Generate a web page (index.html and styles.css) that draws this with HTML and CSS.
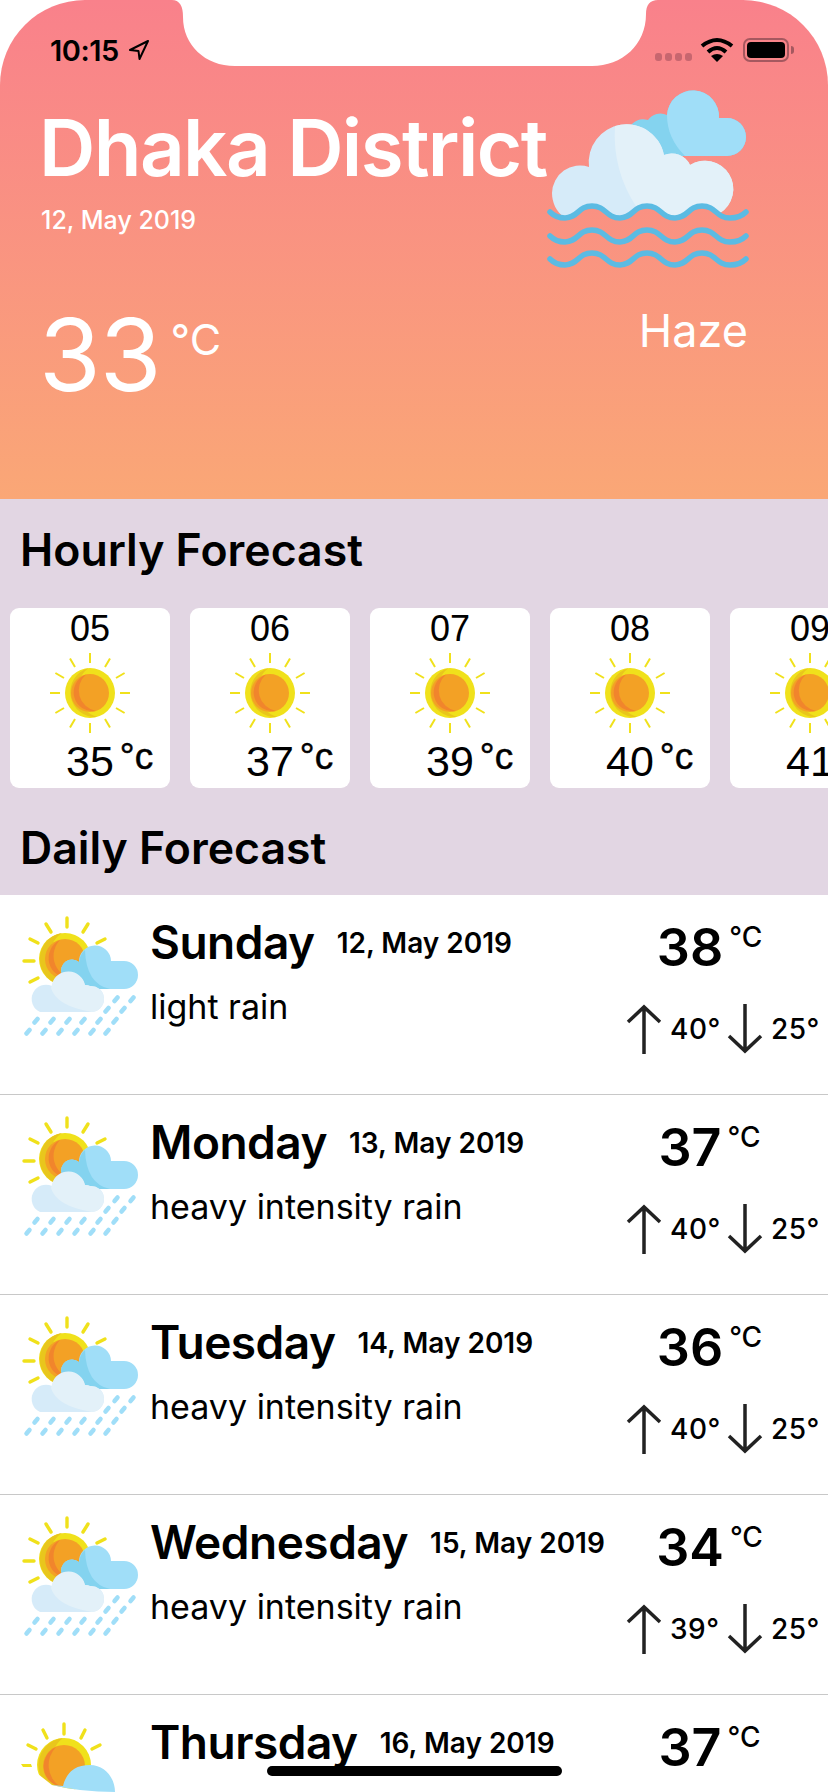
FILE: index.html
```html
<!DOCTYPE html>
<html lang="en">
<head>
    <meta charset="UTF-8">
    <meta name="viewport" content="width=device-width, initial-scale=1.0">
    <title>Weather</title>
    <link rel="stylesheet" href="styles.css">
</head>
<body>
    <svg class="defs" width="0" height="0">
        <defs>
            <symbol id="sun" viewBox="0 0 80 80">
                <g stroke="#f0e11b" stroke-width="2">
                    <path id="rays" d="M40 0V10M40 70V80M0 40H10M70 40H80M20 5.4L25 14M55 66L60 74.6M5.4 20L14 25M66 55L74.6 60M60 5.4L55 14M25 66L20 74.6M74.6 20L66 25M14 55L5.4 60"/>
                </g>
                <circle cx="40" cy="40" r="25" fill="#f0e11b"/>
                <path d="M38.5 15A25 25 0 0 0 47 64A28 28 0 0 1 38.5 15Z" fill="#e9c61c"/>
                <circle cx="40" cy="40" r="19" fill="#f3a125"/>
                <path d="M36 21.5A19 19 0 0 0 46 58A21 21 0 0 1 36 21.5Z" fill="#f1852c"/>
            </symbol>
            <symbol id="rain" viewBox="20 15 120 125">
                <path d="M67 18V27M46 24L51 32M88 24L83 32M30 39L38 43M105 39L97 43M24 61H34M30 82L38 78" stroke="#f0e11b" stroke-width="3.4" stroke-linecap="round"/>
                <circle cx="65" cy="59" r="26" fill="#f0e11b"/>
                <path d="M62 33A26 26 0 0 0 70 85A29 29 0 0 1 62 33Z" fill="#e9c61c"/>
                <circle cx="65" cy="59" r="20" fill="#f3a125"/>
                <path d="M60 40A20 20 0 0 0 70 78A23 23 0 0 1 60 40Z" fill="#f1852c"/>
                <path d="M74 89H124A14 14 0 0 0 124 61H111A16 16 0 0 0 79 62A11 11 0 0 0 62 75A8 8 0 0 0 62 89Z" fill="#a0def8"/>
                <path d="M79 62A11 11 0 0 0 62 75A8 8 0 0 0 62 89H110Q86 84 85 50Q80 54 79 62Z" fill="#84d3ef"/>
                <path d="M40 112H92A13 13 0 0 0 90 86A10 10 0 0 0 85 85A17 17 0 0 0 52 86A13 13 0 0 0 40 112Z" fill="#d6ebf9"/>
                <path d="M51 88Q56 106 92 112A13 13 0 0 0 90 86A10 10 0 0 0 85 85A17 17 0 0 0 52 84Z" fill="#e3f1f9"/>
                <path d="M34.500 122.500L37.500 119M50.500 122.500L53.500 119M66.500 122.500L69.500 119M81.500 122.500L84.500 119M97.500 122.500L100.500 119M113.500 122.500L116.500 119M26.500 133.500L29.500 130M42.500 133.500L45.500 130M58.500 133.500L61.500 130M74.500 133.500L77.500 130M90.500 133.500L93.500 130M105.500 133.500L108.500 130M114.500 101L117.500 97.500M130.500 101L133.500 97.500M105.500 111.500L108.500 108M121.500 111.500L124.500 108" stroke="#a0def8" stroke-width="4.500" stroke-linecap="round"/>
            </symbol>
            <!-- the last row's picture is cut off in a curve at the bottom of the screen -->
            <symbol id="rain-cut" viewBox="10 5 120 77">
                <path d="M54 14V24M33 20L37 28M75 20L71 28M18 35L26 39M90 35L82 39" stroke="#f0e11b" stroke-width="3.4" stroke-linecap="round"/>
                <path d="M11 54H21L22 57H13Z" fill="#f0e11b"/>
                <circle cx="54" cy="55" r="27" fill="#f0e11b"/>
                <path d="M53 28A27 27 0 0 0 58 82A32 32 0 0 1 53 28Z" fill="#e9c61c"/>
                <circle cx="54" cy="56" r="21" fill="#f3a125"/>
                <path d="M46 37A21 21 0 0 0 50 76.600A26 26 0 0 1 46 37Z" fill="#f1852c"/>
                <path d="M18 60L28 64L42 75Q70 82 105 82H18Z" fill="#fff"/>
                <path d="M42 75L53 76Q58 55 80 55C95 55 105 68 105 82Q70 82 42 75Z" fill="#a0def8"/>
            </symbol>
            <symbol id="arrow-up" viewBox="0 0 36 50">
                <path d="M18 50V3M2 18L18 3L34 18" fill="none" stroke="#222" stroke-width="3.500"/>
            </symbol>
            <symbol id="arrow-down" viewBox="0 0 36 50">
                <path d="M18 0V47M2 32L18 47L34 32" fill="none" stroke="#222" stroke-width="3.500"/>
            </symbol>
        </defs>
    </svg>

    <div class="phone">
        <header class="hero">
            <div class="status">
                <div class="status-left">
                    <span class="time">10:15</span>
                    <svg class="location" width="22" height="22" viewBox="0 0 22 22">
                        <path d="M20 2L2 11L10.500 12L11.500 20Z" fill="none" stroke="#000" stroke-width="2" stroke-linejoin="round"/>
                    </svg>
                </div>
                <div class="status-right">
                    <div class="signal"><i></i><i></i><i></i><i></i></div>
                    <svg class="wifi" width="34" height="26" viewBox="0 0 34 26">
                        <path d="M2 9Q17 -3 32 9M8 15Q17 7 26 15" fill="none" stroke="#000" stroke-width="4"/>
                        <path d="M11 19Q17 15 23 19L17 25Z"/>
                    </svg>
                    <div class="battery"><div class="battery-fill"></div></div>
                    <div class="battery-cap"></div>
                </div>
            </div>

            <div class="hero-main">
                <div class="hero-left">
                    <h1 class="city">Dhaka District</h1>
                    <div class="hero-date">12, May 2019</div>
                    <div class="hero-temp"><span class="hero-num">33</span><span class="hero-unit">°C</span></div>
                </div>
                <div class="hero-right">
                    <svg class="haze" width="205" height="185" viewBox="15 15 205 185">
                        <path d="M100 86H197A19 19 0 0 0 197 48H189A26 26 0 0 0 137 45A15 15 0 0 0 118 50A16 16 0 0 0 98 70Z" fill="#84d3ef"/>
                        <path d="M137 45Q137 68 155 86H197A19 19 0 0 0 197 48H189A26 26 0 0 0 137 45Z" fill="#a0def8"/>
                        <path d="M35 148C26 142 22 132 22 123A28 28 0 0 1 59 97A38 38 0 0 1 134 85A20 20 0 0 1 160 95A28 28 0 0 1 190 143C185 140 180 136 172 136C158 136 158 148 145 148C131 148 131 136 117 136C103 136 103 148 90 148C76 148 76 136 62 136C48 136 48 148 35 148Z" fill="#d6ebf9"/>
                        <path d="M85 56A38 38 0 0 1 134 85A20 20 0 0 1 160 95A28 28 0 0 1 190 143C185 140 180 136 172 136C158 136 158 148 145 148C131 148 131 136 117 136C113 136 110 136 107 138Q82 100 85 56Z" fill="#e3f1f9"/>
                        <g fill="none" stroke="#5bbbe3" stroke-width="5.500" stroke-linecap="round">
                            <path id="wave" d="M20 142C24 146 29 148 35 148C48 148 48 136 62 136C76 136 76 148 90 148C103 148 103 136 117 136C131 136 131 148 145 148C158 148 158 136 172 136C186 136 186 148 200 148C206 148 212 146 216 142"/>
                            <use href="#wave" y="24"/>
                            <use href="#wave" y="47"/>
                        </g>
                    </svg>
                    <div class="hero-desc">Haze</div>
                </div>
            </div>
        </header>

        <section class="hourly">
            <h2 class="section-title">Hourly Forecast</h2>
            <div class="hour-list">
                <div class="hour-card">
                    <div class="hour">05</div>
                    <svg class="sun-icon"><use href="#sun"/></svg>
                    <div class="hour-temp">35<span class="hour-unit">°c</span></div>
                </div>
                <div class="hour-card">
                    <div class="hour">06</div>
                    <svg class="sun-icon"><use href="#sun"/></svg>
                    <div class="hour-temp">37<span class="hour-unit">°c</span></div>
                </div>
                <div class="hour-card">
                    <div class="hour">07</div>
                    <svg class="sun-icon"><use href="#sun"/></svg>
                    <div class="hour-temp">39<span class="hour-unit">°c</span></div>
                </div>
                <div class="hour-card">
                    <div class="hour">08</div>
                    <svg class="sun-icon"><use href="#sun"/></svg>
                    <div class="hour-temp">40<span class="hour-unit">°c</span></div>
                </div>
                <div class="hour-card">
                    <div class="hour">09</div>
                    <svg class="sun-icon"><use href="#sun"/></svg>
                    <div class="hour-temp">41<span class="hour-unit">°c</span></div>
                </div>
            </div>
            <h2 class="section-title daily-title">Daily Forecast</h2>
        </section>

        <section class="daily">
            <div class="day-row">
                <svg class="rain-icon"><use href="#rain"/></svg>
                <div class="day-info">
                    <div class="day-head"><span class="day-name">Sunday</span><span class="day-date">12, May 2019</span></div>
                    <div class="day-desc">light rain</div>
                </div>
                <div class="day-temps">
                    <div class="day-temp">38<span class="day-unit">°C</span></div>
                    <div class="min-max">
                        <svg class="arrow"><use href="#arrow-up"/></svg><span class="deg">40°</span>
                        <svg class="arrow"><use href="#arrow-down"/></svg><span class="deg">25°</span>
                    </div>
                </div>
            </div>
            <div class="day-row">
                <svg class="rain-icon"><use href="#rain"/></svg>
                <div class="day-info">
                    <div class="day-head"><span class="day-name">Monday</span><span class="day-date">13, May 2019</span></div>
                    <div class="day-desc">heavy intensity rain</div>
                </div>
                <div class="day-temps">
                    <div class="day-temp">37<span class="day-unit">°C</span></div>
                    <div class="min-max">
                        <svg class="arrow"><use href="#arrow-up"/></svg><span class="deg">40°</span>
                        <svg class="arrow"><use href="#arrow-down"/></svg><span class="deg">25°</span>
                    </div>
                </div>
            </div>
            <div class="day-row">
                <svg class="rain-icon"><use href="#rain"/></svg>
                <div class="day-info">
                    <div class="day-head"><span class="day-name">Tuesday</span><span class="day-date">14, May 2019</span></div>
                    <div class="day-desc">heavy intensity rain</div>
                </div>
                <div class="day-temps">
                    <div class="day-temp">36<span class="day-unit">°C</span></div>
                    <div class="min-max">
                        <svg class="arrow"><use href="#arrow-up"/></svg><span class="deg">40°</span>
                        <svg class="arrow"><use href="#arrow-down"/></svg><span class="deg">25°</span>
                    </div>
                </div>
            </div>
            <div class="day-row">
                <svg class="rain-icon"><use href="#rain"/></svg>
                <div class="day-info">
                    <div class="day-head"><span class="day-name">Wednesday</span><span class="day-date">15, May 2019</span></div>
                    <div class="day-desc">heavy intensity rain</div>
                </div>
                <div class="day-temps">
                    <div class="day-temp">34<span class="day-unit">°C</span></div>
                    <div class="min-max">
                        <svg class="arrow"><use href="#arrow-up"/></svg><span class="deg">39°</span>
                        <svg class="arrow"><use href="#arrow-down"/></svg><span class="deg">25°</span>
                    </div>
                </div>
            </div>
            <div class="day-row">
                <svg class="rain-icon rain-icon-cut"><use href="#rain-cut"/></svg>
                <div class="day-info">
                    <div class="day-head"><span class="day-name">Thursday</span><span class="day-date">16, May 2019</span></div>
                </div>
                <div class="day-temps">
                    <div class="day-temp">37<span class="day-unit">°C</span></div>
                </div>
            </div>
        </section>

        <!-- notch and home bar sit over the page -->
        <svg class="notch" width="486" height="66" viewBox="0 0 486 66">
            <path d="M0 0Q11 0 11 17C11 45 33 66 63 66H420C450 66 474 45 474 14Q474 0 486 0Z" fill="#fff"/>
        </svg>
        <div class="home-bar"></div>
    </div>
</body>
</html>
```

FILE: styles.css
```css
* {
    box-sizing: border-box;
}

body {
    margin: 0;
    background-color: #fff;
    font-family: Inter, "Noto Sans", sans-serif;
    color: #000;
}

.defs {
    position: absolute;
}

.phone {
    position: relative;
    width: 828px;
    height: 1792px;
    overflow: hidden;
}

/* header */
.hero {
    height: 499px;
    padding-top: 36px;
    background: linear-gradient(#f9818b, #faa776);
    border-radius: 85px 85px 0 0;
    color: #fff;
}

.status {
    display: flex;
    justify-content: space-between;
    height: 28px;
    padding: 0 34px 0 50px;
    color: #000;
}

.status-left {
    display: flex;
    align-items: center;
    gap: 9px;
}

.time {
    font-size: 29px;
    font-weight: 600;
    letter-spacing: -0.5px;
}

.status-right {
    display: flex;
    align-items: center;
}

.signal {
    display: flex;
    gap: 3px;
    margin: 14px 8px 0 0;
}

.signal i {
    width: 7px;
    height: 8px;
    border-radius: 3px;
    background-color: #c7666f;
}

.battery {
    width: 46px;
    height: 24px;
    margin-left: 9px;
    padding: 2px;
    border: 2px solid #a5585f;
    border-radius: 7px;
}

.battery-fill {
    height: 100%;
    border-radius: 4px;
    background-color: #000;
}

.battery-cap {
    width: 3px;
    height: 8px;
    margin-left: 2px;
    border-radius: 0 3px 3px 0;
    background-color: #a5585f;
}

.hero-main {
    display: flex;
    justify-content: space-between;
    padding: 18px 78px 0 39px;
}

.hero-left {
    flex: 1;
    min-width: 0;
}

.city {
    margin: 19px 0 0;
    font-size: 78px;
    font-weight: 600;
    letter-spacing: -1.600px;
    line-height: 94px;
    white-space: nowrap;
}

.hero-date {
    margin-top: 10px;
    padding-left: 2px;
    font-size: 25px;
    font-weight: 500;
}

.hero-temp {
    display: flex;
    align-items: flex-start;
    margin-top: 62px;
}

.hero-num {
    font-size: 100px;
    font-weight: 400;
    letter-spacing: -1px;
    line-height: 116px;
}

.hero-unit {
    margin: 16px 0 0 10px;
    font-size: 43px;
    font-weight: 400;
}

.hero-right {
    display: flex;
    flex-direction: column;
    align-items: flex-end;
    flex: none;
    width: 205px;
}

.haze {
    flex: none;
    margin-top: 3px;
}

.hero-desc {
    margin: 33px 2px 0 0;
    font-size: 45px;
    font-weight: 400;
}

/* hourly */
.hourly {
    height: 396px;
    background-color: #e2d6e3;
}

.section-title {
    margin: 0;
    padding: 24px 0 0 20px;
    height: 109px;
    font-size: 44.600px;
    font-weight: 600;
    line-height: 54px;
}

.daily-title {
    padding-top: 33px;
    height: 107px;
}

.hour-list {
    display: flex;
    gap: 20px;
    padding-left: 10px;
    overflow: hidden;
}

.hour-card {
    flex: none;
    width: 160px;
    height: 180px;
    border-radius: 9px;
    background-color: #fff;
    font-family: "Liberation Sans", Arial, sans-serif;
    text-align: center;
}

.hour {
    padding-top: 2px;
    font-size: 36px;
    line-height: 38px;
}

.sun-icon {
    display: block;
    width: 80px;
    height: 80px;
    margin: 5px auto 0;
}

.hour-temp {
    display: flex;
    align-items: flex-start;
    padding-left: 56px;
    margin-top: 5px;
    font-size: 43px;
    line-height: 46px;
}

.hour-unit {
    margin: -4px 0 0 6px;
    font-size: 37px;
    -webkit-text-stroke: 0.5px #000;
}

/* daily */
.day-row {
    display: flex;
    height: 200px;
    padding: 20px 0 0 20px;
    border-bottom: 1px solid #c8c8c8;
}

.rain-icon {
    flex: none;
    width: 120px;
    height: 125px;
}

.rain-icon-cut {
    height: 77px;
}

.day-info {
    flex: none;
    width: 471px;
    margin-left: 10px;
}

.day-head {
    display: flex;
    align-items: baseline;
    gap: 22px;
}

.day-name {
    font-size: 46px;
    font-weight: 600;
    letter-spacing: -0.500px;
    line-height: 54px;
}

.day-date {
    position: relative;
    top: -6px;
    font-size: 28px;
    font-weight: 600;
}

.day-desc {
    margin-top: 16px;
    font-size: 34px;
    line-height: 44px;
}

.day-temps {
    flex: none;
    width: 207px;
}

.day-temp {
    display: flex;
    justify-content: center;
    align-items: flex-start;
    padding-right: 30px;
    margin-top: 2px;
    font-size: 52px;
    font-weight: 600;
    line-height: 62px;
}

.day-unit {
    margin: 0 0 0 6px;
    font-size: 28px;
    font-weight: 500;
    line-height: 40px;
}

.min-max {
    display: flex;
    align-items: center;
    margin-top: 25px;
    padding-left: 5px;
}

.arrow {
    flex: none;
    width: 36px;
    height: 50px;
}

.deg {
    width: 65px;
    padding-left: 8px;
    font-size: 28px;
    font-weight: 500;
    letter-spacing: 0.500px;
}

.notch {
    position: absolute;
    top: 0;
    left: 172px;
}

.home-bar {
    position: absolute;
    left: 267px;
    top: 1766px;
    width: 295px;
    height: 10px;
    border-radius: 5px;
    background-color: #000;
}
```
